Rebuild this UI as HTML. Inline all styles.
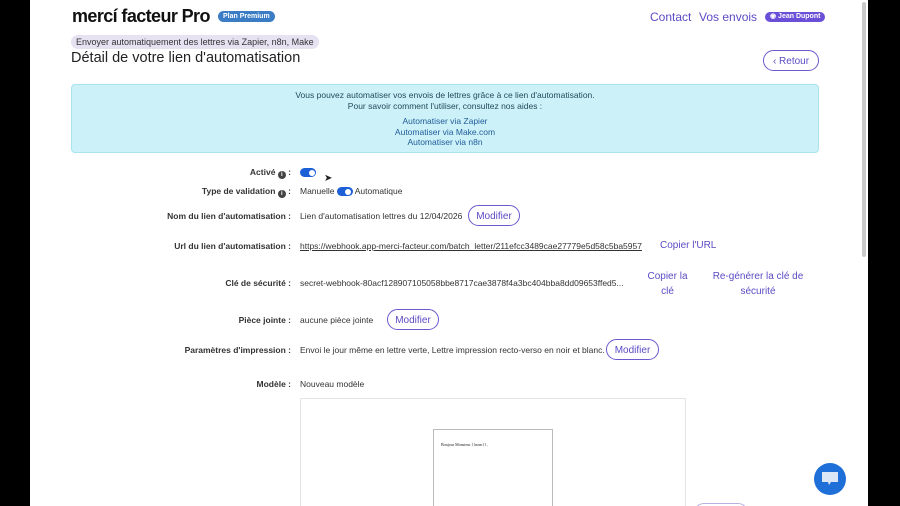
<!DOCTYPE html>
<html style="overflow:hidden;width:900px;height:506px"><head><meta charset="utf-8"><style>
*{margin:0;padding:0;box-sizing:border-box}
html,body{width:900px;height:506px;overflow:hidden}
body{background:#000;font-family:"Liberation Sans",sans-serif;position:relative;color:#222}
#page{position:absolute;left:30px;top:0;width:838px;height:506px;background:#fff}
.a{position:absolute;white-space:nowrap}
.lbl{position:absolute;right:609px;font-size:8.5px;font-weight:bold;color:#333;white-space:nowrap}
.val{position:absolute;left:300px;font-size:8.5px;color:#333;white-space:nowrap}
.btn{position:absolute;border:1px solid #6a5acd;border-radius:13px;color:#5b4bc4;font-size:10px;height:21px;line-height:12px;padding-top:5px;text-align:center;background:#fff}
.link{color:#5b4bc4;font-size:10px;position:absolute;text-align:center}
.tog{display:inline-block;width:16px;height:9px;background:#1d5fd6;border-radius:5px;position:relative;vertical-align:middle}
.tog:after{content:"";position:absolute;right:1.5px;top:1.5px;width:6px;height:6px;border-radius:50%;background:#fff}
.i{display:inline-block;width:8px;height:8px;border-radius:50%;background:#444;color:#fff;font-size:6px;line-height:8px;text-align:center;vertical-align:-1px}
</style></head><body>
<div id="page"></div>
<div style="position:absolute;left:862px;top:2px;width:4px;height:255px;background:#c8c8c8;border-radius:2px"></div>
<div class="a" style="left:72px;top:6px;font-size:18px;font-weight:bold;letter-spacing:-0.6px;color:#111">mercí facteur Pro</div>
<div class="a" style="left:218px;top:11px;background:#3b7dc4;color:#fff;font-size:7px;font-weight:bold;border-radius:6px;padding:0 5px;height:11px;line-height:11px">Plan Premium</div>
<div class="a" style="left:650px;top:10px;font-size:12px;color:#5b4bc4">Contact</div>
<div class="a" style="left:699px;top:10px;font-size:12px;color:#5b4bc4">Vos envois</div>
<div class="a" style="left:765px;top:12px;background:#6a4fd8;color:#fff;font-size:7px;font-weight:bold;border-radius:6px;padding:0 5px;height:10px;line-height:10px">◉ Jean Dupont</div>
<div class="a" style="left:71px;top:35px;background:#e6e2f2;font-size:9px;color:#333;border-radius:7px;padding:0 5px;height:14px;line-height:14px">Envoyer automatiquement des lettres via Zapier, n8n, Make</div>
<div class="a" style="left:71px;top:50px;font-size:14.5px;color:#222">Détail de votre lien d'automatisation</div>
<div class="btn" style="left:763px;top:50px;width:56px">‹&nbsp;Retour</div>
<div class="a" style="left:71px;top:84px;width:748px;height:69px;background:#cdf1f8;border:1px solid #a9e3ef;border-radius:4px;text-align:center;font-size:8.5px;color:#1f4b5a;line-height:10.5px;padding-top:5px">
Vous pouvez automatiser vos envois de lettres grâce à ce lien d'automatisation.<br>Pour savoir comment l'utiliser, consultez nos aides :<br><div style="height:5px"></div>
<span style="color:#1f5c9a">Automatiser via Zapier<br>Automatiser via Make.com<br>Automatiser via n8n</span></div>

<div class="lbl" style="top:167px">Activé <span class="i">i</span> :</div>
<div class="val" style="top:167px"><span class="tog"></span></div>
<div class="a" style="left:324px;top:173px;font-size:10px">➤</div>
<div class="lbl" style="top:186px">Type de validation <span class="i">i</span> :</div>
<div class="val" style="top:186px">Manuelle <span class="tog"></span> Automatique</div>
<div class="lbl" style="top:211px">Nom du lien d'automatisation :</div>
<div class="val" style="top:211px">Lien d'automatisation lettres du 12/04/2026</div>
<div class="btn" style="left:468px;top:205px;width:52px">Modifier</div>
<div class="lbl" style="top:241px">Url du lien d'automatisation :</div>
<div class="val" style="top:241px;text-decoration:underline">https://webhook.app-merci-facteur.com/batch_letter/211efcc3489cae27779e5d58c5ba5957</div>
<div class="link" style="left:660px;top:240px">Copier l'URL</div>
<div class="lbl" style="top:278px">Clé de sécurité :</div>
<div class="val" style="top:278px">secret-webhook-80acf128907105058bbe8717cae3878f4a3bc404bba8dd09653ffed5...</div>
<div class="link" style="left:645px;top:269px;width:45px;line-height:15px;white-space:normal">Copier la clé</div>
<div class="link" style="left:710px;top:269px;width:96px;line-height:15px;white-space:normal">Re-générer la clé de sécurité</div>
<div class="lbl" style="top:315px">Pièce jointe :</div>
<div class="val" style="top:315px">aucune pièce jointe</div>
<div class="btn" style="left:387px;top:309px;width:52px">Modifier</div>
<div class="lbl" style="top:345px">Paramètres d'impression :</div>
<div class="val" style="top:345px">Envoi le jour même en lettre verte, Lettre impression recto-verso en noir et blanc.</div>
<div class="btn" style="left:606px;top:339px;width:53px">Modifier</div>
<div class="lbl" style="top:379px">Modèle :</div>
<div class="val" style="top:379px">Nouveau modèle</div>
<div class="a" style="left:300px;top:398px;width:386px;height:110px;border:1px solid #e4e4e4;border-bottom:none"></div>
<div class="a" style="left:433px;top:429px;width:120px;height:80px;border:1px solid #bbb;border-bottom:none"></div>
<div class="a" style="left:441px;top:442px;font-size:4px;font-family:'Liberation Serif',serif">Bonjour Monsieur {{nom}} ,</div>
<div class="a" style="left:694px;top:503px;width:54px;height:10px;border:1px solid #b8b0e0;border-bottom:none;border-radius:10px 10px 0 0"></div>
<div class="a" style="left:814px;top:463px;width:32px;height:32px;border-radius:50%;background:#1f6fd9"></div>
<svg class="a" style="left:820px;top:470px" width="20" height="18" viewBox="0 0 20 18"><path d="M2 2h16v10h-7l-2 3-1-3H2z" fill="#dbe6f7"/></svg>
</body></html>
